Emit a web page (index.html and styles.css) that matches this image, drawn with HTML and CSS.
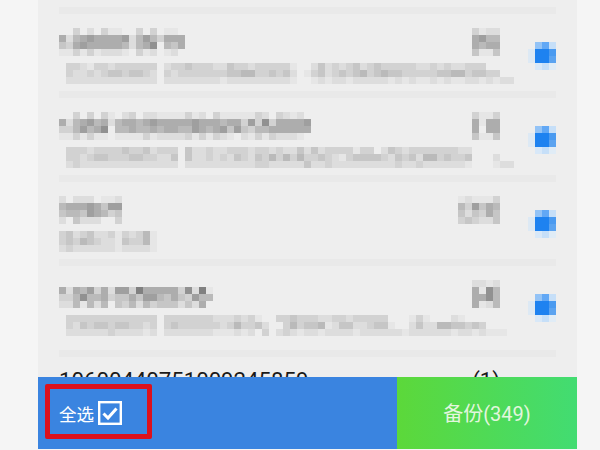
FILE: index.html
```html
<!DOCTYPE html>
<html lang="zh">
<head>
<meta charset="utf-8">
<title>备份</title>
<link rel="stylesheet" href="styles.css">
</head>
<body>
<main class="panel">
  <div class="list">
    <div class="sep"></div>
    <section class="row">
      <div class="body">
        <div class="head">
          <div class="mosaic" data-rows="003020311003030110|625676666725753666|436766666525680546|113131222103120120"></div>
          <div class="mosaic" data-rows="3122|6755|6566|4114"></div>
        </div>
        <div class="mosaic sub" data-rows="03321332333333023343332243323333310024232342343333322323223330000|03223234434432032333333344553343420134234345345443333344553443300|02222222222222022222222122222222210012122122222121211212112212122"></div>
      </div>
      <div class="mosaic dot" data-rows="0abc|deef|deeg|0hcj"></div>
    </section>
    <div class="sep"></div>
    <section class="row">
      <div class="body">
        <div class="head">
          <div class="mosaic" data-rows="003030310230221111312031111132032120|625675625665676666676665663738366667|335756805565565665576567474355666666|113131101111312222313132102131322210"></div>
          <div class="mosaic" data-rows="3113|6166|6066|4114"></div>
        </div>
        <div class="mosaic sub" data-rows="03332333343342333042232233323323224242333313302432333333322000000|03323443334433224042232324324353535334321344443243425534334000200|02322222222222222022222222223322222422322222222232232222221000122"></div>
      </div>
      <div class="mosaic dot" data-rows="0abc|deef|deeg|0hcj"></div>
    </section>
    <div class="sep"></div>
    <section class="row">
      <div class="body">
        <div class="head">
          <div class="mosaic" data-rows="202220112|566676477|455476534|204222003"></div>
          <div class="mosaic" data-rows="121113|537465|424364|343224"></div>
        </div>
        <div class="mosaic sub" data-rows="34234223132351|34354322143351|23222222122221"></div>
      </div>
      <div class="mosaic dot" data-rows="0abc|deef|deeg|0hcj"></div>
    </section>
    <div class="sep"></div>
    <section class="row row-last">
      <div class="body">
        <div class="head">
          <div class="mosaic" data-rows="0000000000000000000000|6265736277396666638291|3358556344647754643755|2251525043525344424260"></div>
          <div class="mosaic" data-rows="2212|6185|6685|6125"></div>
        </div>
        <div class="mosaic sub" data-rows="03333333333333033333332223231003343332233233333000131000210000000|03243443443323034333333235334200353445124422344100242255443430000|02222223222212022222221112120302321221222212222221222222122121110"></div>
      </div>
      <div class="mosaic dot" data-rows="0abc|deef|deeg|0hcj"></div>
    </section>
    <div class="sep"></div>
    <div class="plain">
      <span>10600440751009245859</span>
      <span>(1)</span>
    </div>
  </div>
  <footer class="bar">
    <div class="pick">
      <div class="pick-box">
        <span>全选</span>
        <svg class="check" viewBox="0 0 24 24" aria-hidden="true">
          <rect x="1.2" y="1.2" width="21.6" height="21.6"></rect>
          <path d="M5.5 12.5 L10 17 L18.5 7.5"></path>
        </svg>
      </div>
    </div>
    <button class="backup">备份(349)</button>
  </footer>
</main>
<script src="script.js"></script>
</body>
</html>
```
FILE: styles.css
```css
* { box-sizing: border-box; }
html, body { margin: 0; height: 450px; }
body {
  background: #f5f5f5;
  overflow: hidden;
  font-family: Roboto, "Noto Sans CJK SC", sans-serif;
}
.panel {
  margin-left: 38px;
  width: 539px;
  height: 449px;
  background: #eeeeee;
  display: flex;
  flex-direction: column;
}
.list {
  flex: 1;
  min-height: 0;
  overflow: hidden;
  padding: 7px 21px 0;
}
.sep { height: 7px; background: #e9e9e9; }
.row {
  display: flex;
  align-items: flex-start;
  gap: 14px;
  padding: 14px 0 7px;
}
.row-last { padding-bottom: 14px; }
.body { width: 455px; display: flex; flex-direction: column; gap: 7px; }
.head { width: 441px; display: flex; justify-content: space-between; }
.mosaic { display: block; flex: none; }
.mosaic canvas { display: block; }
.dot { margin-top: 14px; }
.plain {
  display: flex;
  justify-content: space-between;
  width: 441px;
  padding-top: 10px;
  font-size: 22.2px;
  line-height: 26px;
  color: #1a1a1a;
}
.bar { flex: none; height: 72px; display: flex; }
.pick {
  flex: none;
  width: 359px;
  background: #3a84e0;
  padding: 7px 0 0 7px;
}
.pick-box {
  width: 107px;
  height: 55px;
  border: 5px solid #dc101c;
  border-radius: 2px;
  padding: 3px 0 0 9px;
  display: flex;
  align-items: center;
  gap: 4px;
  color: #fff;
  font-size: 17.5px;
}
.check { width: 24px; height: 24px; flex: none; }
.check rect { fill: none; stroke: #fff; stroke-width: 2.4; }
.check path { fill: none; stroke: #fff; stroke-width: 3; }
.backup {
  flex: 1;
  border: 0;
  padding: 0 0 2px;
  background: linear-gradient(90deg, #5cd83a, #42dc72);
  color: #e2f6de;
  font: 20px Roboto, "Noto Sans CJK SC", sans-serif;
}
```
FILE: script.js
```js
var palette = {
  "0": "#eeeeee", "1": "#e6e6e6", "2": "#dddddd", "3": "#d2d2d2", "4": "#c6c6c6",
  "5": "#bababa", "6": "#adadad", "7": "#9f9f9f", "8": "#919191", "9": "#808080",
  a: "#93c3f6", b: "#62a8f5", c: "#c6dff8", d: "#dde9f4", e: "#1e82f0",
  f: "#4a9af0", g: "#5ba3f0", h: "#d8e8f8", j: "#e0ecf6"
};
var CELL = 7;
document.querySelectorAll(".mosaic").forEach(function (el) {
  var rows = el.dataset.rows.split("|");
  var cols = Math.max.apply(null, rows.map(function (r) { return r.length; }));
  var canvas = document.createElement("canvas");
  canvas.width = cols * CELL;
  canvas.height = rows.length * CELL;
  var ctx = canvas.getContext("2d");
  rows.forEach(function (row, y) {
    row.split("").forEach(function (v, x) {
      if (v === "0") return;
      ctx.fillStyle = palette[v];
      ctx.fillRect(x * CELL, y * CELL, CELL, CELL);
    });
  });
  el.appendChild(canvas);
});
```
